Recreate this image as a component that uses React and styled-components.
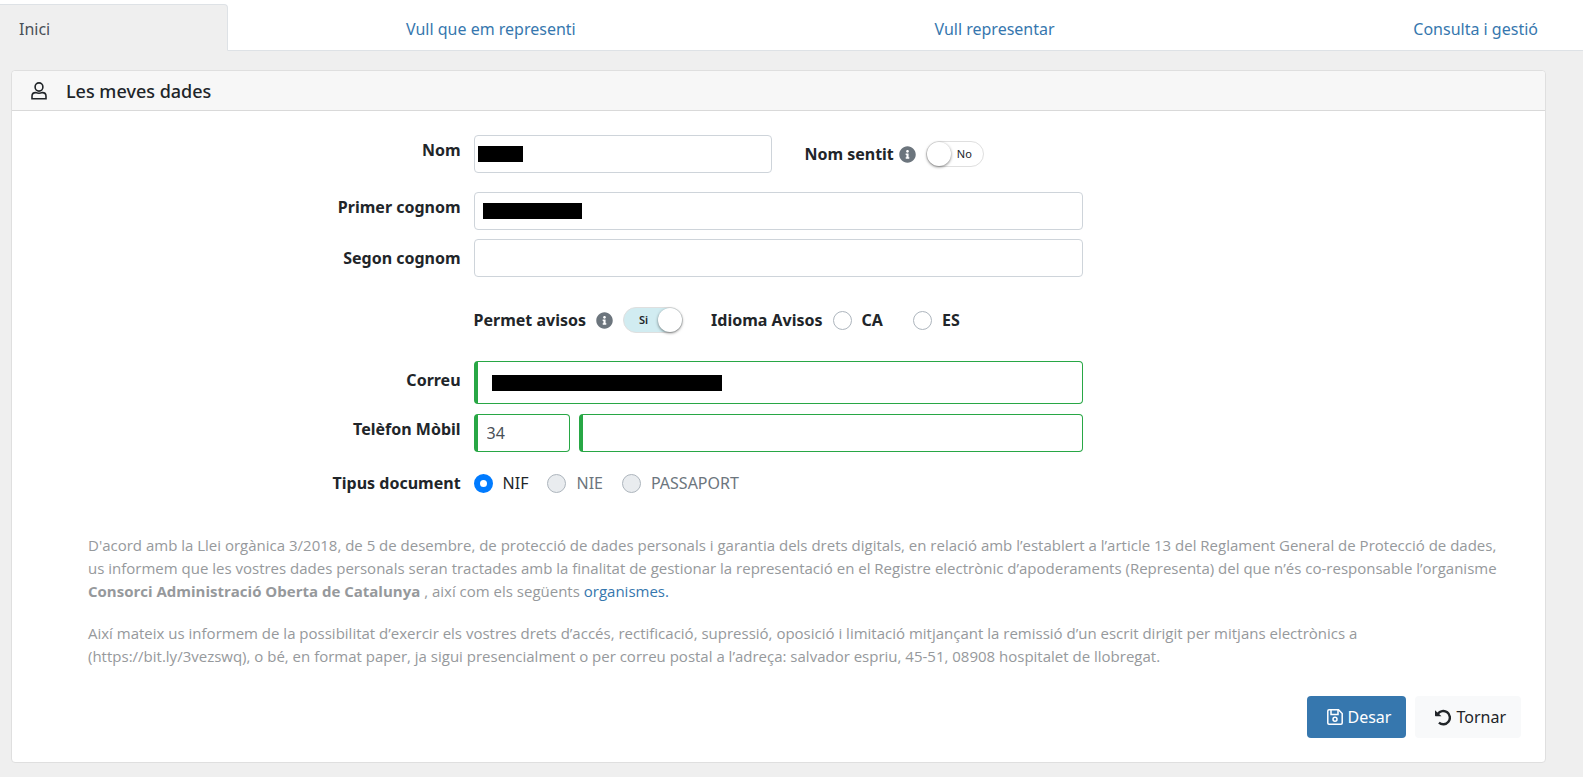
import React, { useState } from "react";
import styled, { createGlobalStyle, css } from "styled-components";
import { FaInfoCircle } from "react-icons/fa";

const GlobalStyle = createGlobalStyle`
  *,
  *::before,
  *::after {
    box-sizing: border-box;
  }

  body {
    margin: 0;
    background-color: #efefef;
    color: #212529;
    font-family: "Noto Sans", "Open Sans", sans-serif;
    font-size: 16px;
    line-height: 24px;
  }

  p {
    margin: 0;
  }
`;

const Nav = styled.nav`
  display: flex;
  padding-top: 4px;
  background-color: #fff;
`;

const tabPadding = css`
  padding: 12px 0 9px;
  border-bottom: 1px solid #dee2e6;
`;

const ActiveTab = styled.a`
  ${tabPadding}
  flex: 0 0 228px;
  padding-left: 19px;
  border-top: 1px solid #dee2e6;
  border-right: 1px solid #dee2e6;
  border-bottom-color: #efefef;
  border-top-right-radius: 4px;
  background-color: #efefef;
  color: #495057;
  text-decoration: none;
`;

const Tabs = styled.div`
  ${tabPadding}
  flex: 1;
  display: flex;
  justify-content: space-between;
  padding-top: 13px;
  padding-left: 178px;
  padding-right: 45px;
`;

const Link = styled.a`
  color: #3677ae;
  text-decoration: none;
`;

const Card = styled.main`
  margin: 19px 37px 14px 11px;
  border: 1px solid #dfdfdf;
  border-radius: 4px;
  background-color: #fff;
`;

const CardHeader = styled.header`
  display: flex;
  align-items: center;
  gap: 19px;
  height: 40px;
  padding: 0 19px;
  border-bottom: 1px solid #d9d9d9;
  border-radius: 4px 4px 0 0;
  background-color: #f7f7f7;
`;

const CardTitle = styled.h1`
  margin: 0;
  font-size: 18px;
  font-weight: 500;
`;

const Form = styled.form`
  padding: 24px 13px;
`;

const Row = styled.div`
  display: grid;
  grid-template-columns: 5fr 7fr 5fr;
  column-gap: 13px;
  margin-bottom: ${(p) => p.$space || 9}px;
`;

const labelText = css`
  font-size: 16px;
  font-weight: 700;
`;

const RowLabel = styled.label`
  ${labelText}
  padding-top: ${(p) => (p.$low ? 7 : 3)}px;
  text-align: right;
`;

const GroupTitle = styled.span`
  ${labelText}
  text-align: right;
`;

const Controls = styled.div`
  grid-column: 2;
  display: flex;
  align-items: center;
  gap: ${(p) => p.$gap || 9}px;
`;

const InlineLabel = styled.label`
  ${labelText}
`;

const Field = styled.div`
  position: relative;
  flex: ${(p) => p.$flex || "1"};
`;

const Input = styled.input`
  display: block;
  width: 100%;
  height: ${(p) => (p.$tall ? 43 : 38)}px;
  padding: 6px 9px;
  border: 1px solid #ced4da;
  border-radius: 4px;
  background-color: #fff;
  color: #495057;
  font: inherit;

  ${(p) =>
    p.$valid &&
    css`
      border-color: #28a745;
      border-left-width: 4px;
    `}
`;

const Redacted = styled.span`
  position: absolute;
  top: 0;
  bottom: 0;
  left: ${(p) => p.$left}px;
  width: ${(p) => p.$width}px;
  height: 16px;
  margin: auto 0;
  background-color: #000;
`;

const Group = styled.div`
  display: flex;
  align-items: center;
  gap: ${(p) => p.$gap || 10}px;
`;

const InfoIcon = styled(FaInfoCircle)`
  width: 17px;
  height: 17px;
  color: #6c757d;
`;

const SwitchBox = styled.label`
  position: relative;
  display: flex;
  align-items: center;
  justify-content: ${(p) => (p.$on ? "flex-start" : "flex-end")};
  width: ${(p) => (p.$on ? 60 : 58)}px;
  height: 26px;
  padding: 0 ${(p) => (p.$on ? 15 : 11)}px;
  border: 1px solid #dfdfdf;
  border-radius: 13px;
  background-color: ${(p) => (p.$on ? "#d1ecf1" : "#fff")};
  font-size: 11px;
  font-weight: ${(p) => (p.$on ? 600 : 400)};
  cursor: pointer;

  &::after {
    content: "";
    position: absolute;
    top: 0;
    ${(p) => (p.$on ? "right" : "left")}: 0;
    width: 24px;
    height: 24px;
    border-radius: 50%;
    background-color: #fff;
    box-shadow: 0 1px 3px rgba(0, 0, 0, 0.5);
  }

  input {
    position: absolute;
    inset: 0;
    margin: 0;
    opacity: 0;
  }
`;

const RadioLabel = styled.label`
  display: flex;
  align-items: center;
  gap: 10px;
  color: ${(p) => (p.$disabled ? "#6c757d" : "#212529")};
  font-weight: ${(p) => (p.$bold ? 700 : 400)};
`;

const RadioInput = styled.input`
  appearance: none;
  width: 19px;
  height: 19px;
  margin: 0;
  border: 1px solid #adb5bd;
  border-radius: 50%;
  background-color: #fff;

  &:disabled {
    background-color: #e9ecef;
  }

  &:checked {
    border: 6px solid #007bff;
  }
`;

const Legal = styled.section`
  display: grid;
  gap: 19px;
  padding: 30px 20px 0 63px;
  color: #96999c;
  font-family: "Open Sans", "Noto Sans", sans-serif;
  font-size: 15px;
  line-height: 23px;
`;

const Actions = styled.div`
  display: flex;
  justify-content: flex-end;
  gap: 9px;
  padding: 28px 11px 0 0;
`;

const Button = styled.button`
  display: flex;
  align-items: center;
  gap: 5px;
  height: 42px;
  padding: 0 15px 0 20px;
  border: 0;
  border-radius: 4px;
  background-color: ${(p) => (p.$primary ? "#3677ae" : "#f8f9fa")};
  color: ${(p) => (p.$primary ? "#fff" : "#212529")};
  font: inherit;
  cursor: pointer;
`;

const UserIcon = () => (
  <svg width="16" height="18" viewBox="0 0 16 18" fill="none" stroke="currentColor" strokeWidth="1.6">
    <ellipse cx="8" cy="5" rx="3.9" ry="4.1" />
    <path d="M4.600 10.600C6.800 11.400 9.200 11.400 11.400 10.600C13.800 10.600 15 12.200 15 14.200V16.800H1V14.200C1 12.200 2.200 10.600 4.600 10.600Z" />
  </svg>
);

const SaveIcon = () => (
  <svg width="16" height="16" viewBox="0 0 16 16" fill="none" stroke="currentColor" strokeWidth="1.5">
    <path d="M2 .8H11.500L15.200 4.500V14Q15.200 15.200 14 15.200H2Q.8 15.200 .8 14V2Q.8 .8 2 .8Z" />
    <path d="M4 1V5.500H11V1" />
    <circle cx="8" cy="10.300" r="2" />
  </svg>
);

const UndoIcon = () => (
  <svg width="16" height="17" viewBox="0 0 17 17" fill="none">
    <path d="M3 4.700A7 7 0 1 1 4.200 13.900" stroke="currentColor" strokeWidth="2.600" />
    <path d="M0 .8L6.900 7.200H.7Q0 7.200 0 6.500Z" fill="currentColor" />
  </svg>
);

const Switch = ({ id, checked, onChange }) => (
  <SwitchBox $on={checked}>
    <input
      id={id}
      type="checkbox"
      role="switch"
      checked={checked}
      onChange={(e) => onChange(e.target.checked)}
    />
    {checked ? "Si" : "No"}
  </SwitchBox>
);

const Radio = ({ label, bold, disabled, ...rest }) => (
  <RadioLabel $bold={bold} $disabled={disabled}>
    <RadioInput type="radio" disabled={disabled} {...rest} />
    {label}
  </RadioLabel>
);

export default function App() {
  const [feltName, setFeltName] = useState(false);
  const [notices, setNotices] = useState(true);

  return (
    <>
      <GlobalStyle />
      <Nav>
        <ActiveTab href="#inici" aria-current="page">
          Inici
        </ActiveTab>
        <Tabs>
          <Link href="#representi">Vull que em representi</Link>
          <Link href="#representar">Vull representar</Link>
          <Link href="#consulta">Consulta i gestió</Link>
        </Tabs>
      </Nav>
      <Card>
        <CardHeader>
          <UserIcon />
          <CardTitle>Les meves dades</CardTitle>
        </CardHeader>
        <Form onSubmit={(e) => e.preventDefault()}>
          <Row $space={19}>
            <RowLabel htmlFor="nom">Nom</RowLabel>
            <Controls $gap={32}>
              <Field $flex="0 0 49%">
                <Input id="nom" />
                <Redacted $left={4} $width={45} />
              </Field>
              <Group>
                <Group $gap={5}>
                  <InlineLabel htmlFor="nom-sentit">Nom sentit</InlineLabel>
                  <InfoIcon />
                </Group>
                <Switch id="nom-sentit" checked={feltName} onChange={setFeltName} />
              </Group>
            </Controls>
          </Row>
          <Row>
            <RowLabel htmlFor="cognom1">Primer cognom</RowLabel>
            <Controls>
              <Field>
                <Input id="cognom1" />
                <Redacted $left={9} $width={99} />
              </Field>
            </Controls>
          </Row>
          <Row $space={30}>
            <RowLabel htmlFor="cognom2" $low>
              Segon cognom
            </RowLabel>
            <Controls>
              <Field>
                <Input id="cognom2" />
              </Field>
            </Controls>
          </Row>
          <Row $space={28}>
            <Controls $gap={28}>
              <Group>
                <InlineLabel htmlFor="avisos">Permet avisos</InlineLabel>
                <InfoIcon />
                <Switch id="avisos" checked={notices} onChange={setNotices} />
              </Group>
              <Group role="radiogroup" aria-labelledby="idioma">
                <InlineLabel as="span" id="idioma">
                  Idioma Avisos
                </InlineLabel>
                <Group $gap={30}>
                  <Radio name="idioma" label="CA" bold />
                  <Radio name="idioma" label="ES" bold />
                </Group>
              </Group>
            </Controls>
          </Row>
          <Row $space={10}>
            <RowLabel htmlFor="correu" $low>
              Correu
            </RowLabel>
            <Controls>
              <Field>
                <Input id="correu" type="email" $valid $tall />
                <Redacted $left={18} $width={230} />
              </Field>
            </Controls>
          </Row>
          <Row $space={19}>
            <RowLabel htmlFor="telefon">Telèfon Mòbil</RowLabel>
            <Controls>
              <Field $flex="0 0 96px">
                <Input aria-label="Prefix" defaultValue="34" $valid />
              </Field>
              <Field>
                <Input id="telefon" type="tel" $valid />
              </Field>
            </Controls>
          </Row>
          <Row role="radiogroup" aria-labelledby="tipus">
            <GroupTitle id="tipus">Tipus document</GroupTitle>
            <Controls>
              <Group $gap={19}>
                <Radio name="tipus" label="NIF" defaultChecked />
                <Radio name="tipus" label="NIE" disabled />
                <Radio name="tipus" label="PASSAPORT" disabled />
              </Group>
            </Controls>
          </Row>
          <Legal>
            <p>
              D'acord amb la Llei orgànica 3/2018, de 5 de desembre, de protecció de dades personals i garantia dels
              drets digitals, en relació amb l’establert a l’article 13 del Reglament General de Protecció de dades, us
              informem que les vostres dades personals seran tractades amb la finalitat de gestionar la representació en
              el Registre electrònic d’apoderaments (Representa) del que n’és co-responsable l’organisme{" "}
              <b>Consorci Administració Oberta de Catalunya</b> , així com els següents{" "}
              <Link href="#organismes">organismes.</Link>
            </p>
            <p>
              Així mateix us informem de la possibilitat d’exercir els vostres drets d’accés, rectificació, supressió,
              oposició i limitació mitjançant la remissió d’un escrit dirigit per mitjans electrònics a
              (https://bit.ly/3vezswq), o bé, en format paper, ja sigui presencialment o per correu postal a l’adreça:
              salvador espriu, 45-51, 08908 hospitalet de llobregat.
            </p>
          </Legal>
          <Actions>
            <Button type="submit" $primary>
              <SaveIcon />
              Desar
            </Button>
            <Button type="button">
              <UndoIcon />
              Tornar
            </Button>
          </Actions>
        </Form>
      </Card>
    </>
  );
}
